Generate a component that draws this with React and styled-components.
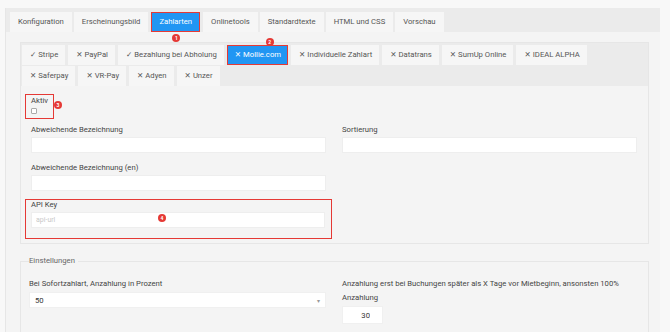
import React from "react";
import styled, { createGlobalStyle } from "styled-components";

const GlobalStyle = createGlobalStyle`
  html, body {
    margin: 0;
    padding: 0;
    background: #f8f8f8;
    font-family: Roboto, "Liberation Sans", sans-serif;
    color: #444;
    overflow: hidden;
  }
`;

const mainTabs = [
  "Konfiguration",
  "Erscheinungsbild",
  "Zahlarten",
  "Onlinetools",
  "Standardtexte",
  "HTML und CSS",
  "Vorschau",
];

const payTabs = [
  { name: "Stripe", on: true },
  { name: "PayPal" },
  { name: "Bezahlung bei Abholung", on: true },
  { name: "Mollie.com", active: true },
  { name: "Individuelle Zahlart" },
  { name: "Datatrans" },
  { name: "SumUp Online" },
  { name: "IDEAL ALPHA" },
  { name: "Saferpay" },
  { name: "VR-Pay" },
  { name: "Adyen" },
  { name: "Unzer" },
];

export default function App() {
  return (
    <>
      <GlobalStyle />
      <Outer>
        <TabBar>
          {mainTabs.map((t) => (
            <Tab key={t} active={t === "Zahlarten"}>
              {t}
              {t === "Zahlarten" && <Badge style={{ left: 20, top: 21 }}>1</Badge>}
            </Tab>
          ))}
        </TabBar>

        <Panel>
          <SubTabBar>
            {payTabs.map((t) => (
              <SubTab key={t.name} active={t.active}>
                <Mark>{t.on ? "✓" : "✕"}</Mark>
                {t.name}
                {t.active && <Badge style={{ left: 38, top: -8 }}>2</Badge>}
              </SubTab>
            ))}
          </SubTabBar>

          <PanelBody>
            <Row>
              <Highlight tight>
                <Label>Aktiv</Label>
                <CheckBox />
                <Badge style={{ left: 28, top: 6 }}>3</Badge>
              </Highlight>
            </Row>
            <Row gap={6}>
              <Field>
                <Label>Abweichende Bezeichnung</Label>
                <Input />
              </Field>
              <Field>
                <Label>Sortierung</Label>
                <Input />
              </Field>
            </Row>
            <Row gap={10}>
              <Field>
                <Label>Abweichende Bezeichnung (en)</Label>
                <Input />
              </Field>
            </Row>
            <Row gap={8}>
              <Highlight>
                <Label>API Key</Label>
                <Input placeholder="api-url" />
                <Badge style={{ left: 132, top: 14 }}>4</Badge>
              </Highlight>
            </Row>
          </PanelBody>
        </Panel>

        <Settings>
          <Legend>Einstellungen</Legend>
          <SettingsGrid>
            <Field>
              <WideLabel>Bei Sofortzahlart, Anzahlung in Prozent</WideLabel>
              <Select>
                <span>50</span>
                <Caret>▾</Caret>
              </Select>
            </Field>
            <Field>
              <WideLabel>
                Anzahlung erst bei Buchungen später als X Tage vor Mietbeginn,
                ansonsten 100% Anzahlung
              </WideLabel>
              <SmallInput defaultValue="30" />
            </Field>
          </SettingsGrid>
        </Settings>
      </Outer>
    </>
  );
}

const Outer = styled.div`
  margin: 8px 0 0 5px;
  width: 655px;
  height: 330px;
  background: #f4f4f4;
  border-left: 1px solid #e6e6e6;
  box-sizing: border-box;
`;

const TabBar = styled.div`
  display: flex;
  gap: 2px;
  padding: 4px 4px 0 4px;
  background: #ebebeb;
  height: 24px;
  box-sizing: border-box;
`;

const Tab = styled.div`
  position: relative;
  height: 20px;
  line-height: 18px;
  padding: 0 7px;
  font-size: 7.7px;
  color: ${(p) => (p.active ? "#fff" : "#555")};
  background: ${(p) => (p.active ? "#2196f3" : "#f6f6f6")};
  border: 1px solid ${(p) => (p.active ? "#e53935" : "#f6f6f6")};
  box-sizing: border-box;
  white-space: nowrap;
  ${(p) => p.active && "margin: 0 1px 0 1px;"}
`;

const Badge = styled.span`
  position: absolute;
  width: 8px;
  height: 8px;
  border-radius: 50%;
  background: #e53935;
  color: #fff;
  font-size: 5px;
  line-height: 8px;
  text-align: center;
  font-weight: 700;
`;

const Panel = styled.div`
  margin: 10px 11px 0 14px;
  border: 1px solid #e6e6e6;
  background: #f4f4f4;
`;

const SubTabBar = styled.div`
  display: flex;
  flex-wrap: wrap;
  gap: 1px 3px;
  padding: 2px 40px 0 1px;
  background: #ebebeb;
`;

const SubTab = styled.div`
  position: relative;
  height: 20px;
  line-height: 18px;
  padding: 0 6px 0 7px;
  font-size: 7.7px;
  color: ${(p) => (p.active ? "#fff" : "#555")};
  background: ${(p) => (p.active ? "#2196f3" : "#f6f6f6")};
  border: 1px solid ${(p) => (p.active ? "#e53935" : "#f6f6f6")};
  box-sizing: border-box;
  white-space: nowrap;
`;

const Mark = styled.span`
  font-family: "DejaVu Sans", sans-serif;
  font-size: 7.5px;
  font-weight: 700;
  margin-right: 2px;
`;

const PanelBody = styled.div`
  padding: 8px 10px 4px 10px;
`;

const Row = styled.div`
  display: grid;
  grid-template-columns: 295px 295px;
  column-gap: 16px;
  margin-top: ${(p) => p.gap || 0}px;
`;

const Highlight = styled.div`
  position: relative;
  margin-left: -6px;
  padding: ${(p) => (p.tight ? "1px 5px 3px" : "0 6px 10px 5px")};
  border: 1px solid #e53935;
  justify-self: ${(p) => (p.tight ? "start" : "stretch")};
  margin-right: ${(p) => (p.tight ? 0 : -6)}px;
`;

const Field = styled.div`
  display: flex;
  flex-direction: column;
`;

const Label = styled.div`
  font-size: 7.7px;
  line-height: 10px;
  color: #444;
  margin-bottom: 2px;
`;

const WideLabel = styled.div`
  font-size: 7.7px;
  line-height: 14px;
  color: #444;
  margin-bottom: 1px;
`;

const CheckBox = styled.span`
  display: block;
  width: 6px;
  height: 6px;
  margin: 0 0 1px 0;
  border: 1px solid #aaa;
  border-radius: 1px;
  background: #fff;
  box-sizing: border-box;
`;

const Input = styled.input`
  display: block;
  width: 100%;
  height: 16px;
  box-sizing: border-box;
  border: 1px solid #eeeeee;
  background: #fff;
  padding: 0 4px;
  margin: 0;
  font-family: inherit;
  font-size: 7px;
  outline: none;
  &::placeholder {
    color: #c8c8c8;
  }
`;

const Settings = styled.fieldset`
  margin: 12px 11px 0 14px;
  padding: 0 8px;
  border: 1px solid #e6e6e6;
  border-bottom: none;
  min-width: 0;
  height: 90px;
`;

const Legend = styled.legend`
  padding: 0 3px 0 0;
  font-size: 7.7px;
  line-height: 10px;
  color: #666;
`;

const SettingsGrid = styled.div`
  display: grid;
  grid-template-columns: 297px 295px;
  column-gap: 16px;
  margin-top: 11px;
`;

const Select = styled.div`
  display: flex;
  align-items: center;
  justify-content: space-between;
  height: 16px;
  padding: 0 5px;
  background: #fff;
  border: 1px solid #f0f0f0;
  box-sizing: border-box;
  font-size: 7.7px;
  color: #333;
`;

const Caret = styled.span`
  font-family: "DejaVu Sans", sans-serif;
  font-size: 6px;
  color: #999;
`;

const SmallInput = styled.input`
  width: 41px;
  height: 18px;
  box-sizing: border-box;
  border: 1px solid #f0f0f0;
  background: #fff;
  text-align: right;
  padding: 0 12px 0 0;
  margin: 0;
  font-family: inherit;
  font-size: 7.7px;
  color: #333;
  outline: none;
`;
